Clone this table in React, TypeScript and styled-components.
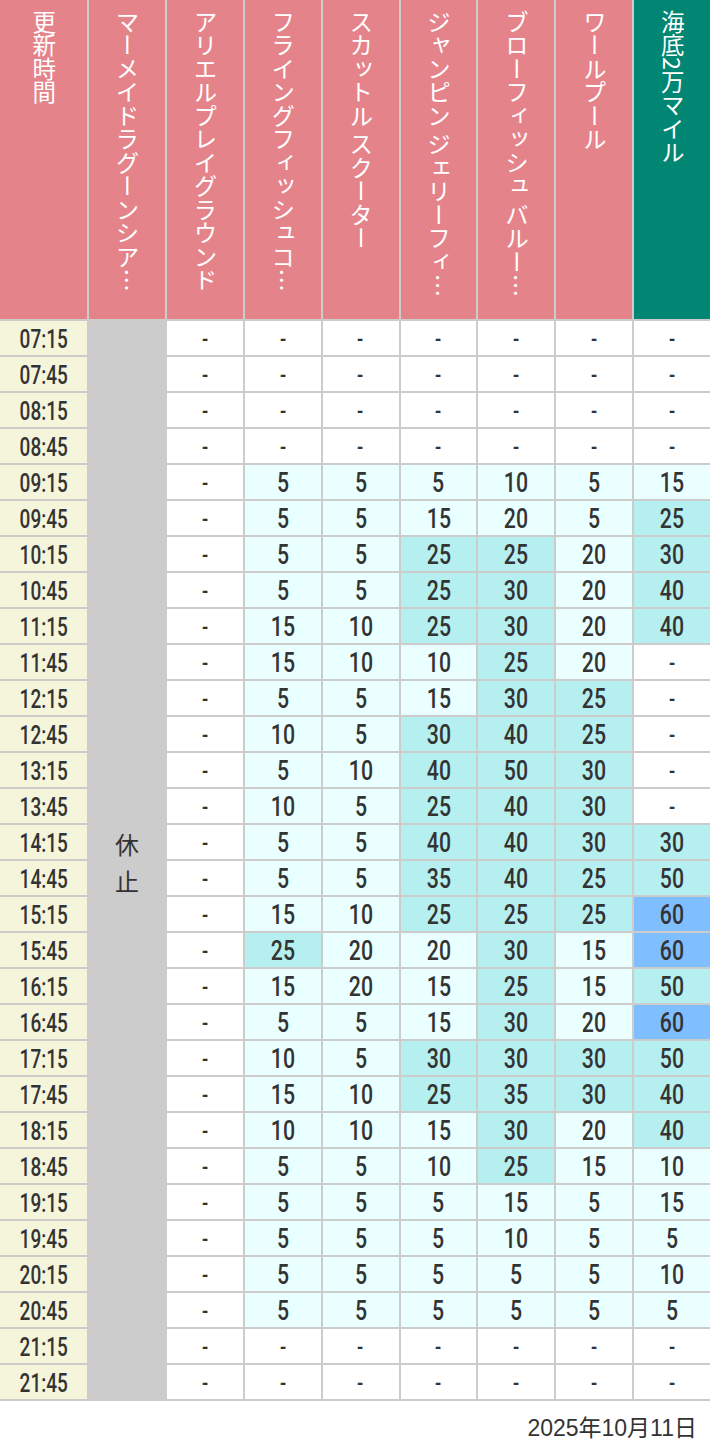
import React from 'react';
import styled, { createGlobalStyle } from 'styled-components';

const GlobalStyle = createGlobalStyle`
  html, body {
    margin: 0;
    padding: 0;
    background: #ffffff;
  }
  body {
    font-family: "Noto Sans CJK JP", "Noto Sans", sans-serif;
  }
`;

const Page = styled.div`
  width: 710px;
`;

const Table = styled.div`
  display: grid;
  grid-template-columns: 87px repeat(8, 1fr);
  grid-template-rows: 319px repeat(30, 34px);
  gap: 2px;
  background: #cccccc;
  border-bottom: 2px solid #cccccc;
`;

const HeaderCell = styled.div<{ $teal?: boolean }>`
  background: ${p => (p.$teal ? '#008672' : '#e5838b')};
  display: flex;
  justify-content: center;
  padding-top: 10px;
  box-sizing: border-box;
`;

const HeaderLabel = styled.div`
  writing-mode: vertical-rl;
  font-family: "Noto Sans CJK JP", sans-serif;
  font-size: 23.5px;
  line-height: 1.5;
  color: #ffffff;
  white-space: nowrap;
  overflow: hidden;
  text-overflow: ellipsis;
  height: 292px;
`;

const TimeCell = styled.div`
  background: #f5f5dc;
  display: flex;
  align-items: center;
  justify-content: center;
`;

const ClosedCell = styled.div`
  grid-column: 2;
  grid-row: 2 / span 30;
  background: #cccccc;
  display: flex;
  align-items: center;
  justify-content: center;
  font-family: "Noto Sans CJK JP", sans-serif;
  font-size: 24px;
  line-height: 37px;
  color: #333333;
  text-align: center;
  padding-top: 4px;
`;

const levelColors = {
  none: '#ffffff',
  low: '#eaffff',
  mid: '#b6eff0',
  high: '#80bfff',
};

type Level = keyof typeof levelColors;

const ValueCell = styled.div<{ $level: Level }>`
  background: ${p => levelColors[p.$level]};
  display: flex;
  align-items: center;
  justify-content: center;
`;

const Num = styled.span<{ $size: number }>`
  display: inline-block;
  font-family: Roboto, "Liberation Sans", sans-serif;
  font-weight: 500;
  font-size: ${p => p.$size}px;
  line-height: 1;
  color: #333333;
  transform: scaleX(0.76);
  padding-top: 2px;
`;

const Footer = styled.div`
  text-align: right;
  padding: 12px 13px 0 0;
  font-family: "Liberation Sans", "Noto Sans CJK JP", sans-serif;
  font-size: 23px;
  line-height: 30px;
  color: #333333;
`;

const attractions = [
  'マーメイドラグーンシアター',
  'アリエルプレイグラウンド',
  'フライングフィッシュコースター',
  'スカットル スクーター',
  'ジャンピン ジェリーフィッシュ',
  'ブローフィッシュ バルーンレース',
  'ワールプール',
];

type Row = [string, ...(number | null)[]];

const rows: Row[] = [
  ['07:15', null, null, null, null, null, null, null],
  ['07:45', null, null, null, null, null, null, null],
  ['08:15', null, null, null, null, null, null, null],
  ['08:45', null, null, null, null, null, null, null],
  ['09:15', null, 5, 5, 5, 10, 5, 15],
  ['09:45', null, 5, 5, 15, 20, 5, 25],
  ['10:15', null, 5, 5, 25, 25, 20, 30],
  ['10:45', null, 5, 5, 25, 30, 20, 40],
  ['11:15', null, 15, 10, 25, 30, 20, 40],
  ['11:45', null, 15, 10, 10, 25, 20, null],
  ['12:15', null, 5, 5, 15, 30, 25, null],
  ['12:45', null, 10, 5, 30, 40, 25, null],
  ['13:15', null, 5, 10, 40, 50, 30, null],
  ['13:45', null, 10, 5, 25, 40, 30, null],
  ['14:15', null, 5, 5, 40, 40, 30, 30],
  ['14:45', null, 5, 5, 35, 40, 25, 50],
  ['15:15', null, 15, 10, 25, 25, 25, 60],
  ['15:45', null, 25, 20, 20, 30, 15, 60],
  ['16:15', null, 15, 20, 15, 25, 15, 50],
  ['16:45', null, 5, 5, 15, 30, 20, 60],
  ['17:15', null, 10, 5, 30, 30, 30, 50],
  ['17:45', null, 15, 10, 25, 35, 30, 40],
  ['18:15', null, 10, 10, 15, 30, 20, 40],
  ['18:45', null, 5, 5, 10, 25, 15, 10],
  ['19:15', null, 5, 5, 5, 15, 5, 15],
  ['19:45', null, 5, 5, 5, 10, 5, 5],
  ['20:15', null, 5, 5, 5, 5, 5, 10],
  ['20:45', null, 5, 5, 5, 5, 5, 5],
  ['21:15', null, null, null, null, null, null, null],
  ['21:45', null, null, null, null, null, null, null],
];

const levelOf = (v: number | null): Level => {
  if (v === null) return 'none';
  if (v >= 60) return 'high';
  if (v >= 25) return 'mid';
  return 'low';
};

const App = () => {
  return (
    <Page>
      <GlobalStyle />
      <Table>
        <HeaderCell>
          <HeaderLabel>更新時間</HeaderLabel>
        </HeaderCell>
        {attractions.map(name => (
          <HeaderCell key={name}>
            <HeaderLabel>{name}</HeaderLabel>
          </HeaderCell>
        ))}
        <HeaderCell $teal>
          <HeaderLabel>海底2万マイル</HeaderLabel>
        </HeaderCell>

        <ClosedCell>
          休<br />止
        </ClosedCell>

        {rows.map(([time, ...values], r) => (
          <React.Fragment key={time}>
            <TimeCell style={{ gridRow: r + 2 }}>
              <Num $size={25}>{time}</Num>
            </TimeCell>
            {values.map((v, c) => (
              <ValueCell
                key={c}
                $level={levelOf(v)}
                style={{ gridRow: r + 2, gridColumn: c + 3 }}
              >
                <Num $size={v === null ? 24 : 28}>{v === null ? '-' : v}</Num>
              </ValueCell>
            ))}
          </React.Fragment>
        ))}
      </Table>
      <Footer>2025年10月11日</Footer>
    </Page>
  );
};

export default App;
